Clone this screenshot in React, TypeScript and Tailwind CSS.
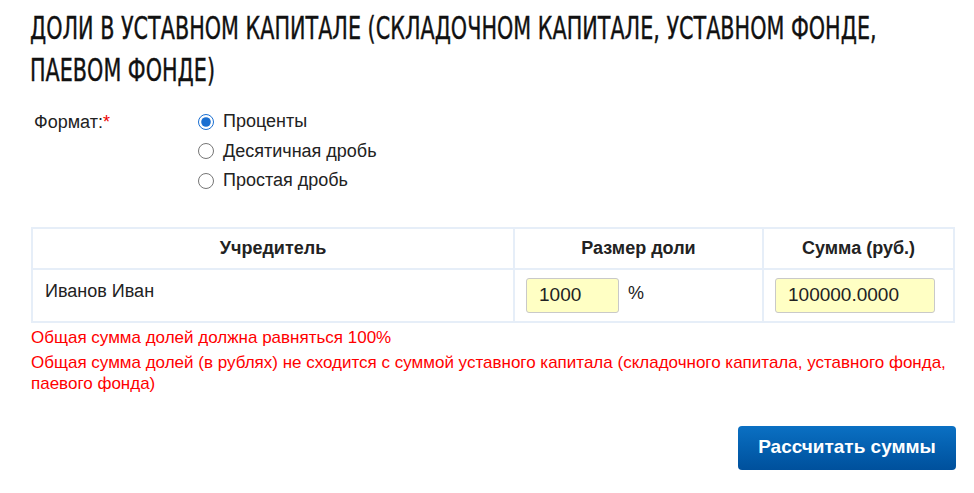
import { useState } from "react";

const formats = ["Проценты", "Десятичная дробь", "Простая дробь"];

export default function App() {
    const [format, setFormat] = useState(0);

    return (
        <div className=" w-[974px] h-[493px] overflow-hidden bg-white text-[#222] font-['Liberation_Sans',Arial,sans-serif] ">
            <h1 className=" ml-[30px] pt-[7px] w-[1200px] origin-left scale-x-[0.72] text-[32px] leading-[42px] font-normal text-[#111] font-['DejaVu_Sans_Condensed','DejaVu_Sans',sans-serif] whitespace-nowrap [-webkit-text-stroke:0.4px_#111] ">
                ДОЛИ В УСТАВНОМ КАПИТАЛЕ (СКЛАДОЧНОМ КАПИТАЛЕ, УСТАВНОМ ФОНДЕ,
                <br />
                ПАЕВОМ ФОНДЕ)
            </h1>

            <div className=" flex pl-[34px] mt-[16px] text-[18px] ">
                <div className=" w-[164px] pt-[2px] ">
                    Формат:<span className=" text-[#e00] ">*</span>
                </div>
                <div className=" flex flex-col ">
                    {formats.map((f, i) => (
                        <label key={f} className=" flex items-center h-[29.5px] gap-[9px] cursor-pointer ">
                            <input
                                type="radio"
                                name="format"
                                checked={format === i}
                                onChange={() => setFormat(i)}
                                className=" w-[16px] h-[16px] m-0 accent-[#1a6fd1] "
                            />
                            {f}
                        </label>
                    ))}
                </div>
            </div>

            <div className=" pl-[31px] pr-[18px] mt-[31px] ">
                <table className=" w-[924px] border-collapse border-2 border-[#e6eef8] text-[18px] ">
                    <thead>
                        <tr className=" h-[41px] ">
                            <th className=" w-[482px] border-2 border-[#e6eef8] font-bold text-center ">Учредитель</th>
                            <th className=" w-[249px] border-2 border-[#e6eef8] font-bold text-center ">Размер доли</th>
                            <th className=" border-2 border-[#e6eef8] font-bold text-center ">Сумма (руб.)</th>
                        </tr>
                    </thead>
                    <tbody>
                        <tr className=" h-[53px] ">
                            <td className=" border-2 border-[#e6eef8] align-top pl-[12px] pt-[8px] ">Иванов Иван</td>
                            <td className=" border-2 border-[#e6eef8] align-top pl-[11px] pt-[8px] ">
                                <div className=" flex items-start gap-[9px] ">
                                    <input
                                        defaultValue="1000"
                                        className=" w-[93px] h-[35px] px-[12px] bg-[#ffffc4] border border-[#c9c9c9] rounded-[3px] text-[19px] outline-none "
                                    />
                                    <span className=" pt-[2px] ">%</span>
                                </div>
                            </td>
                            <td className=" border-2 border-[#e6eef8] align-top pl-[11px] pt-[8px] ">
                                <input
                                    defaultValue="100000.0000"
                                    className=" w-[160px] h-[35px] px-[12px] bg-[#ffffc4] border border-[#c9c9c9] rounded-[3px] text-[19px] outline-none "
                                />
                            </td>
                        </tr>
                    </tbody>
                </table>

                <div className=" mt-[4px] text-[17px] leading-[21px] text-[#f00] ">
                    <p>Общая сумма долей должна равняться 100%</p>
                    <p className=" mt-[4px] ">
                        Общая сумма долей (в рублях) не сходится с суммой уставного капитала (складочного капитала, уставного фонда,
                        <br />
                        паевого фонда)
                    </p>
                </div>

                <div className=" flex justify-end mt-[32px] ">
                    <button className=" w-[218px] h-[44px] rounded-[4px] bg-gradient-to-b from-[#0b70c3] to-[#00509c] text-white text-[19px] font-bold ">
                        Рассчитать суммы
                    </button>
                </div>
            </div>
        </div>
    );
}
